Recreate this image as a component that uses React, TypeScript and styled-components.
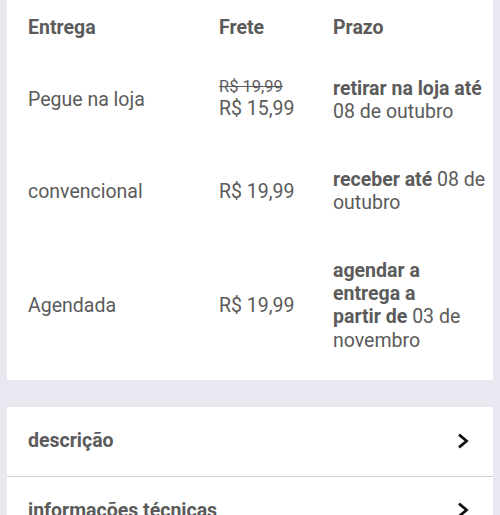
import React from "react";
import styled, { createGlobalStyle } from "styled-components";

const GlobalStyle = createGlobalStyle`
  html, body {
    margin: 0;
    padding: 0;
    background: #e9e8f0;
  }
  body {
    font-family: Roboto, "Noto Sans", Arial, sans-serif;
    color: #5b5b5b;
  }
`;

const Page = styled.div`
  padding: 0 7px;
  display: flex;
  flex-direction: column;
  gap: 27px;
`;

const Panel = styled.section`
  background: #ffffff;
  padding: 16px 3px 6px 21px;
`;

const Row = styled.div<{ $header?: boolean }>`
  display: grid;
  grid-template-columns: 191px 114px 1fr;
  align-items: center;
  font-size: 19.5px;
  line-height: 23.4px;
  padding: ${(p) => (p.$header ? "0 0 15px" : "22px 0")};
  font-weight: ${(p) => (p.$header ? 700 : 400)};
`;

const PriceStack = styled.div`
  display: flex;
  flex-direction: column;
  margin-bottom: 3px;
`;

const OldPrice = styled.span`
  font-size: 16.5px;
  line-height: 21px;
  text-decoration: line-through;
`;

const Strong = styled.strong`
  font-weight: 700;
`;

const Card = styled.section`
  background: #ffffff;
`;

const LinkRow = styled.div<{ $divider?: boolean }>`
  display: flex;
  align-items: center;
  justify-content: space-between;
  padding: 22px 24px 23px 21px;
  font-size: 19.5px;
  line-height: 23.4px;
  font-weight: 700;
  border-bottom: ${(p) => (p.$divider ? "1px solid #cfcfcf" : "none")};
`;

const Chevron = () => (
  <svg width="12" height="16" viewBox="0 0 12 16" aria-hidden="true">
    <polyline
      points="2,1.6 9.6,8 2,14.4"
      fill="none"
      stroke="#111"
      strokeWidth="2.7"
      strokeLinejoin="miter"
    />
  </svg>
);

export default function App() {
  return (
    <>
      <GlobalStyle />
      <Page>
        <Panel>
          <Row $header>
            <span>Entrega</span>
            <span>Frete</span>
            <span>Prazo</span>
          </Row>
          <Row>
            <span>Pegue na loja</span>
            <PriceStack>
              <OldPrice>R$ 19,99</OldPrice>
              <span>R$ 15,99</span>
            </PriceStack>
            <span>
              <Strong>retirar na loja até</Strong> 08 de outubro
            </span>
          </Row>
          <Row>
            <span>convencional</span>
            <span>R$ 19,99</span>
            <span>
              <Strong>receber até</Strong> 08 de outubro
            </span>
          </Row>
          <Row>
            <span>Agendada</span>
            <span>R$ 19,99</span>
            <span>
              <Strong>agendar a entrega a partir{"\u00a0"}de</Strong> 03 de novembro
            </span>
          </Row>
        </Panel>
        <Card>
          <LinkRow $divider>
            <span>descrição</span>
            <Chevron />
          </LinkRow>
          <LinkRow>
            <span>informações técnicas</span>
            <Chevron />
          </LinkRow>
        </Card>
      </Page>
    </>
  );
}
